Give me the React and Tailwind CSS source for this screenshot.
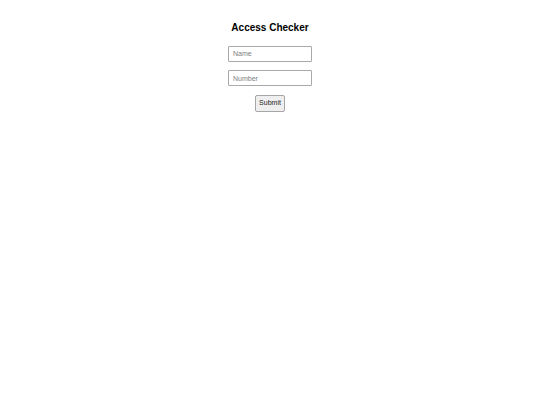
import React, { useState } from 'react';

export default function App() {
    const [name, setName] = useState('');
    const [number, setNumber] = useState('');

    return (
        <div className="min-h-screen bg-white flex flex-col items-center pt-[22px] font-['Liberation_Sans',Arial,sans-serif]">
            <h1 className="text-[10px] leading-[12px] font-bold text-black">Access Checker</h1>

            <form
                onSubmit={(e) => e.preventDefault()}
                className="flex flex-col items-center mt-[11.5px]"
            >
                <input
                    type="text"
                    value={name}
                    onChange={(e) => setName(e.target.value)}
                    placeholder="Name"
                    className="w-[84px] h-[16px] px-[4px] text-[7px] border border-[#a9a9a9] rounded-[1px] bg-white text-black placeholder:text-[#808080] outline-none"
                />
                <input
                    type="text"
                    value={number}
                    onChange={(e) => setNumber(e.target.value)}
                    placeholder="Number"
                    className="w-[84px] h-[16px] mt-[8.5px] px-[4px] text-[7px] border border-[#a9a9a9] rounded-[1px] bg-white text-black placeholder:text-[#808080] outline-none"
                />
                <button
                    type="submit"
                    className="w-[30px] h-[17px] mt-[8.5px] text-[7px] font-normal text-[#222] bg-[#efefef] border border-[#a6a6a6] rounded-[2px] flex items-center justify-center"
                >
                    Submit
                </button>
            </form>
        </div>
    );
}
